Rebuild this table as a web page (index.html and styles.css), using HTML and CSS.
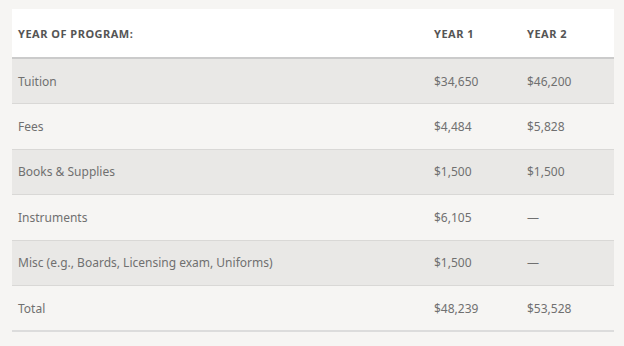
FILE: index.html
```html
<!DOCTYPE html>
<html>
<head>
<meta charset="utf-8">
<link rel="stylesheet" href="styles.css">
</head>
<body>
<table class="cost">
  <thead>
    <tr><th>YEAR OF PROGRAM:</th><th>YEAR 1</th><th>YEAR 2</th></tr>
  </thead>
  <tbody>
    <tr class="alt"><td>Tuition</td><td>$34,650</td><td>$46,200</td></tr>
    <tr><td>Fees</td><td>$4,484</td><td>$5,828</td></tr>
    <tr class="alt"><td>Books &amp; Supplies</td><td>$1,500</td><td>$1,500</td></tr>
    <tr><td>Instruments</td><td>$6,105</td><td>—</td></tr>
    <tr class="alt"><td>Misc (e.g., Boards, Licensing exam, Uniforms)</td><td>$1,500</td><td>—</td></tr>
    <tr class="last"><td>Total</td><td>$48,239</td><td>$53,528</td></tr>
  </tbody>
</table>
</body>
</html>
```
FILE: styles.css
```css
html, body {
  margin: 0;
  background: #f6f5f3;
}
body {
  padding: 9px 10px 0 12px;
  font-family: "Noto Sans", "DejaVu Sans", sans-serif;
}
.cost {
  width: 602px;
  border-collapse: collapse;
  table-layout: fixed;
}
.cost th:nth-child(1), .cost td:nth-child(1) { width: 410px; }
.cost th:nth-child(2), .cost td:nth-child(2) { width: 87px; }
.cost th {
  background: #ffffff;
  height: 48px;
  padding: 0 0 0 6px;
  text-align: left;
  font-size: 11px;
  letter-spacing: 0.5px;
  font-weight: 700;
  color: #555555;
  border-bottom: 2px solid #cbcbcb;
}
.cost td {
  height: 44.4px;
  padding: 0 0 0 6px;
  font-size: 12px;
  color: #707070;
  border-bottom: 1px solid #d9d8d6;
}
.cost tr.alt td { background: #e9e8e6; }
.cost tr.last td { border-bottom: 2px solid #dcdcdc; }
```
